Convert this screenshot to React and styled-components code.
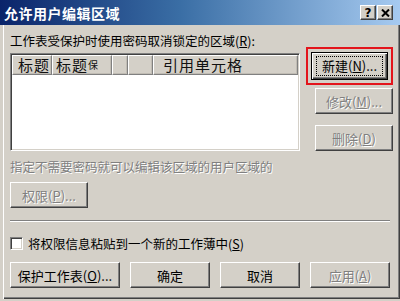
import React from "react";
import styled, { createGlobalStyle } from "styled-components";

const GlobalStyle = createGlobalStyle`
  * {
    margin: 0;
    padding: 0;
    box-sizing: border-box;
  }

  body {
    background: #d4d0c8;
    font-family: "Noto Sans CJK SC", "Liberation Sans", sans-serif;
    overflow: hidden;
  }
`;

const FONT = `"Noto Sans CJK SC", "Liberation Sans", sans-serif`;

// Window frame
const Window = styled.div`
  width: 400px;
  height: 301px;
  display: flex;
  flex-direction: column;
  background: #d4d0c8;
`;

const TitleBar = styled.div`
  height: 25px;
  flex-shrink: 0;
  display: flex;
  align-items: center;
  justify-content: space-between;
  padding: 0 7px 0 4px;
  background: linear-gradient(90deg, #0a246a 0%, #3a6ea5 45%, #a6caf0 100%);
`;

const TitleText = styled.div`
  color: #fff;
  font: bold 14px ${FONT};
  line-height: 16px;
  letter-spacing: 0.5px;
`;

const TitleButtons = styled.div`
  display: flex;
  gap: 1px;
`;

const TitleButton = styled.div`
  width: 16px;
  height: 15px;
  background: #d4d0c8;
  border: 1px solid;
  border-color: #fff #404040 #404040 #fff;
  box-shadow: inset -1px -1px #808080;
  display: flex;
  align-items: center;
  justify-content: center;
  font: bold 12px "DejaVu Sans", sans-serif;
  line-height: 12px;
  color: #000;
`;

const Body = styled.div`
  flex: 1;
  display: flex;
  flex-direction: column;
  padding: 8px 7px 0 7px;
  margin: 0 0 2px 0;
  border-left: 3px solid #d4d0c8;
  box-shadow: inset 1px 0 #fff, inset -1px -1px #404040, inset -2px -2px #808080;
`;

const TopRow = styled.div`
  display: flex;
  gap: 6px;
`;

const LeftColumn = styled.div`
  width: 290px;
  display: flex;
  flex-direction: column;
`;

const RightColumn = styled.div`
  width: 87px;
  display: flex;
  flex-direction: column;
  align-items: flex-end;
  padding-top: 14px;
`;

const Label = styled.div`
  font: 12.5px ${FONT};
  line-height: 15px;
  height: ${(p) => p.$h || 15}px;
  color: ${(p) => (p.$disabled ? "#808080" : "#000")};
  text-shadow: ${(p) => (p.$disabled ? "1px 1px #fff" : "none")};
  white-space: nowrap;
  margin-top: ${(p) => p.$mt || 0}px;
`;

// List view
const ListBox = styled.div`
  height: 98px;
  background: #fff;
  border: 1px solid;
  border-color: #808080 #fff #fff #808080;
  box-shadow: inset 1px 1px #404040, inset -1px -1px #d4d0c8;
  padding: 1px;
  display: flex;
  flex-direction: column;
`;

const HeaderRow = styled.div`
  display: flex;
  height: 20px;
`;

const HeaderCell = styled.div`
  width: ${(p) => (p.$w ? `${p.$w}px` : "auto")};
  flex: ${(p) => (p.$w ? "none" : 1)};
  background: #d4d0c8;
  border: 1px solid;
  border-color: #fff #808080 #808080 #fff;
  box-shadow: inset -1px -1px #c0bcb4;
  padding-left: ${(p) => p.$pl || 5}px;
  font: 15px ${FONT};
  line-height: 18px;
  letter-spacing: 1px;
  color: #111;
  white-space: nowrap;
`;

const Small = styled.span`
  font-size: 10px;
  line-height: 10px;
  vertical-align: 2px;
  letter-spacing: 0;
`;

// Buttons
const Highlight = styled.div`
  border: 2px solid #e3141b;
  padding: 3px;
  width: 87px;
`;

const Button = styled.button`
  width: ${(p) => (p.$w ? `${p.$w}px` : "100%")};
  height: ${(p) => p.$h || 26}px;
  flex-shrink: 0;
  margin-top: ${(p) => p.$mt || 0}px;
  background: #d4d0c8;
  border: 1px solid;
  border-color: ${(p) => (p.$default ? "#000" : "#fff #404040 #404040 #fff")};
  box-shadow: ${(p) =>
    p.$default
      ? "inset 1px 1px #fff, inset -1px -1px #404040, inset -2px -2px #808080"
      : "inset -1px -1px #808080"};
  font: 13px ${FONT};
  color: ${(p) => (p.disabled ? "#808080" : "#000")};
  text-shadow: ${(p) => (p.disabled ? "1px 1px #fff" : "none")};
  display: flex;
  align-items: center;
  justify-content: center;
  padding: 0;
  white-space: nowrap;
`;

const FocusRing = styled.span`
  border: 1px dotted #000;
  padding: 1px 5px;
  line-height: 16px;
`;

const Separator = styled.div`
  height: 2px;
  margin-top: 12px;
  margin-right: 3px;
  border-top: 1px solid #808080;
  border-bottom: 1px solid #fff;
`;

const CheckRow = styled.label`
  display: flex;
  align-items: center;
  gap: 5px;
  margin-top: 14px;
  height: 15px;
`;

const CheckBox = styled.span`
  width: 13px;
  height: 13px;
  background: #fff;
  border: 1px solid;
  border-color: #808080 #fff #fff #808080;
  box-shadow: inset 1px 1px #404040, inset -1px -1px #d4d0c8;
`;

const ButtonRow = styled.div`
  display: flex;
  gap: 10px;
  margin-top: 11px;
`;

const CloseIcon = () => (
  <svg width="9" height="8" viewBox="0 0 9 8">
    <path d="M1 0.5 L8 7.5 M8 0.5 L1 7.5" stroke="#000" strokeWidth="2" fill="none" />
  </svg>
);

export default function App() {
  return (
    <>
      <GlobalStyle />
      <Window>
        <TitleBar>
          <TitleText>允许用户编辑区域</TitleText>
          <TitleButtons>
            <TitleButton>?</TitleButton>
            <TitleButton>
              <CloseIcon />
            </TitleButton>
          </TitleButtons>
        </TitleBar>
        <Body>
          <TopRow>
            <LeftColumn>
              <Label $h={20}>
                工作表受保护时使用密码取消锁定的区域(<u>R</u>):
              </Label>
              <ListBox>
                <HeaderRow>
                  <HeaderCell $w={40} $pl={5}>标题</HeaderCell>
                  <HeaderCell $w={60} $pl={3}>
                    标题<Small>保</Small>
                  </HeaderCell>
                  <HeaderCell $w={16} />
                  <HeaderCell $w={25} />
                  <HeaderCell $pl={9}>引用单元格</HeaderCell>
                </HeaderRow>
              </ListBox>
            </LeftColumn>
            <RightColumn>
              <Highlight>
                <Button $default $h={28}>
                  <FocusRing>
                    新建(<u>N</u>)...
                  </FocusRing>
                </Button>
              </Highlight>
              <Button $w={78} $mt={3} disabled>
                修改(<u>M</u>)...
              </Button>
              <Button $w={78} $mt={11} disabled>
                删除(<u>D</u>)
              </Button>
            </RightColumn>
          </TopRow>
          <Label $disabled $mt={8}>
            指定不需要密码就可以编辑该区域的用户区域的
          </Label>
          <Button $w={78} $mt={8} disabled>
            权限(<u>P</u>)...
          </Button>
          <Separator />
          <CheckRow>
            <CheckBox />
            <Label>
              将权限信息粘贴到一个新的工作薄中(<u>S</u>)
            </Label>
          </CheckRow>
          <ButtonRow>
            <Button $w={110}>
              保护工作表(<u>O</u>)...
            </Button>
            <Button $w={80}>确定</Button>
            <Button $w={80}>取消</Button>
            <Button $w={80} disabled>
              应用(<u>A</u>)
            </Button>
          </ButtonRow>
        </Body>
      </Window>
    </>
  );
}
